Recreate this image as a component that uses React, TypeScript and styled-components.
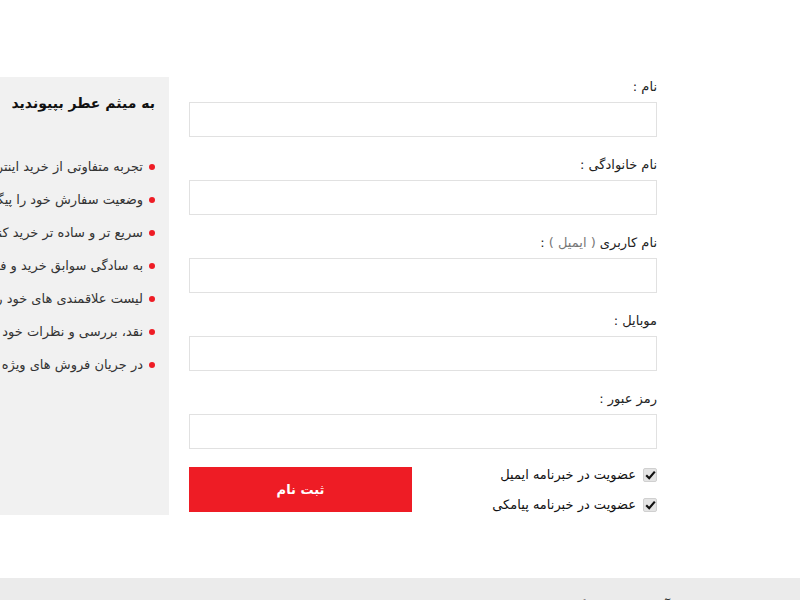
import React from "react";
import styled, { createGlobalStyle } from "styled-components";

const GlobalStyle = createGlobalStyle`
	html, body {
		margin: 0;
		padding: 0;
		background: #fff;
		direction: rtl;
		overflow-x: hidden;
	}
	body {
		font-family: "DejaVu Sans", "Noto Sans", sans-serif;
		color: #222;
	}
	* {
		box-sizing: border-box;
	}
`;

const benefits = [
	"تجربه متفاوتی از خرید اینترنتی داشته باشید",
	"وضعیت سفارش خود را پیگیری نمایید",
	"سریع تر و ساده تر خرید کنید",
	"به سادگی سوابق خرید و فعالیت های خود را مشاهده کنید",
	"لیست علاقمندی های خود را بسازید",
	"نقد، بررسی و نظرات خود را با دیگران به اشتراک بگذارید",
	"در جریان فروش های ویژه و محصولات جدید قرار بگیرید",
];

const fields = [
	{ label: "نام :", type: "text" },
	{ label: "نام خانوادگی :", type: "text" },
	{ label: "نام کاربری", hint: "( ایمیل )", type: "email" },
	{ label: "موبایل :", type: "tel" },
	{ label: "رمز عبور :", type: "password" },
];

const newsletters = ["عضویت در خبرنامه ایمیل", "عضویت در خبرنامه پیامکی"];

export default function App() {
	return (
		<>
			<GlobalStyle />
			<Page>
				<Section>
					<Form onSubmit={(e) => e.preventDefault()}>
						{fields.map((f) => (
							<Field key={f.label}>
								<Label>
									{f.label}
									{f.hint && (
										<>
											{" "}
											<Hint>{f.hint}</Hint> :
										</>
									)}
								</Label>
								<Input type={f.type} />
							</Field>
						))}
						<Actions>
							<Checks>
								{newsletters.map((n) => (
									<CheckRow key={n}>
										<CheckBox>
											<svg width="11" height="10" viewBox="0 0 11 10">
												<path
													d="M1.2 5.2 L4.2 8.2 L9.8 1.6"
													fill="none"
													stroke="#111"
													strokeWidth="2.2"
												/>
											</svg>
										</CheckBox>
										<span>{n}</span>
									</CheckRow>
								))}
							</Checks>
							<SubmitButton type="submit">ثبت نام</SubmitButton>
						</Actions>
					</Form>
					<Sidebar>
						<SidebarTitle>به میثم عطر بپیوندید</SidebarTitle>
						<BenefitList>
							{benefits.map((b) => (
								<Benefit key={b}>{b}</Benefit>
							))}
						</BenefitList>
					</Sidebar>
				</Section>
				<Footer>
					<FooterTitle>آدرس فروشگاه</FooterTitle>
				</Footer>
			</Page>
		</>
	);
}

const Page = styled.div`
	width: 800px;
	padding-top: 77px;
`;

const Section = styled.div`
	display: flex;
	align-items: flex-start;
	gap: 20px;
	padding-right: 143px;
	overflow: hidden;
	height: 438px;
`;

const Form = styled.form`
	display: flex;
	flex-direction: column;
	width: 468px;
	flex-shrink: 0;
`;

const Field = styled.div`
	display: flex;
	flex-direction: column;
	margin-bottom: 18px;
`;

const Label = styled.label`
	font-size: 13px;
	line-height: 20px;
	color: #222;
	margin-bottom: 5px;
`;

const Hint = styled.span`
	color: #777;
`;

const Input = styled.input`
	height: 35px;
	width: 100%;
	border: 1px solid #e1e1e1;
	background: #fff;
	outline: none;
	padding: 0 10px;
	font-family: inherit;
`;

const Actions = styled.div`
	display: flex;
	justify-content: space-between;
	align-items: flex-start;
`;

const Checks = styled.div`
	display: flex;
	flex-direction: column;
	gap: 10px;
	margin-top: -2px;
`;

const CheckRow = styled.label`
	display: flex;
	align-items: center;
	gap: 7px;
	font-size: 13px;
	line-height: 20px;
	color: #111;
`;

const CheckBox = styled.span`
	display: flex;
	align-items: center;
	justify-content: center;
	width: 14px;
	height: 14px;
	border-radius: 2px;
	background: #e4e4e4;
	border: 1px solid #d0d0d0;
`;

const SubmitButton = styled.button`
	width: 223px;
	height: 45px;
	border: none;
	background: #ee1c25;
	color: #fff;
	font-family: inherit;
	font-size: 13px;
	font-weight: bold;
	cursor: pointer;
`;

const Sidebar = styled.aside`
	width: 330px;
	flex-shrink: 0;
	height: 438px;
	background: #f1f1f1;
	padding: 13px 14px 0 0;
`;

const SidebarTitle = styled.h2`
	margin: 0;
	font-size: 14px;
	line-height: 26px;
	font-weight: bold;
	color: #111;
`;

const BenefitList = styled.ul`
	list-style: none;
	margin: 41px 0 0;
	padding: 0;
	display: flex;
	flex-direction: column;
	gap: 13px;
`;

const Benefit = styled.li`
	display: flex;
	align-items: center;
	gap: 6px;
	font-size: 13px;
	line-height: 20px;
	color: #333;
	white-space: nowrap;

	&::before {
		content: "";
		width: 6px;
		height: 6px;
		border-radius: 50%;
		background: #ee1c25;
		flex-shrink: 0;
	}
`;

const Footer = styled.footer`
	margin-top: 63px;
	background: #ebebeb;
	height: 160px;
	padding: 19px 130px 0 0;
`;

const FooterTitle = styled.h3`
	margin: 0;
	font-size: 14px;
	line-height: 20px;
	color: #333;
`;
